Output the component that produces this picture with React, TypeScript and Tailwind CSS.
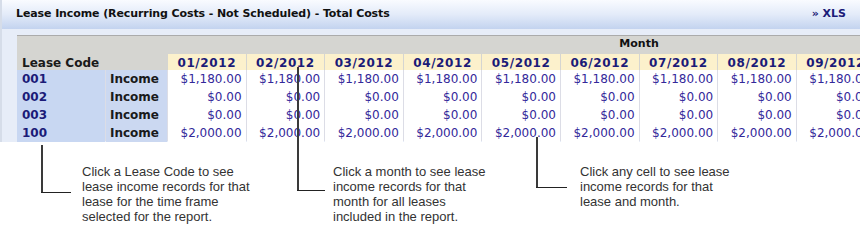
import React from "react";

const months = [
  "01/2012", "02/2012", "03/2012", "04/2012", "05/2012", "06/2012",
  "07/2012", "08/2012", "09/2012", "10/2012", "11/2012", "12/2012",
];

const rows = [
  { code: "001", val: "$1,180.00" },
  { code: "002", val: "$0.00" },
  { code: "003", val: "$0.00" },
  { code: "100", val: "$2,000.00" },
];

const gridCols = "grid grid-cols-[88px_61px_repeat(12,77.6px)] gap-x-px";

export default function App() {
  return (
    <div className="relative w-[860px] h-[242px] overflow-hidden bg-white" style={{ fontFamily: '"DejaVu Sans", Verdana, sans-serif' }}>
      {/* Panel */}
      <div className="h-[142px] overflow-hidden bg-[#e7edf8] border-l-2 border-[#d6dde9]">
        <div className="h-[29px] bg-gradient-to-b from-[#f9fbff] via-[#e3ebf9] to-[#c3d3ef] flex items-center justify-between pl-[14px] pr-[14px]">
          <span className="text-[11px] font-bold text-[#111] tracking-[-0.1px]">
            Lease Income (Recurring Costs - Not Scheduled) - Total Costs
          </span>
          <span className="text-[11px] font-bold text-[#1b1b78]">» XLS</span>
        </div>
        <div className="pt-[6px] pl-[15px]">
          <div className="w-[1106px] bg-[#d5d5d1] border-t border-[#ababab]">
            {/* Header row 1 */}
            <div className={`${gridCols} h-[17px]`}>
              <div />
              <div />
              <div className="col-span-12 flex items-center justify-center text-[11px] font-bold text-[#111]">
                Month
              </div>
            </div>
            {/* Header row 2 */}
            <div className={`${gridCols} h-[17px]`}>
              <div className="flex items-center pl-[5px] text-[12px] font-bold text-[#1a1a1a] whitespace-nowrap">
                Lease Code
              </div>
              <div />
              {months.map((m) => (
                <div
                  key={m}
                  className="mt-px bg-[#fcf1cc] flex items-center justify-center text-[12px] font-bold text-[#1b1b78] tracking-[0.6px]"
                >
                  {m}
                </div>
              ))}
            </div>
          </div>
          {/* Data rows */}
          <div className="w-[1106px] bg-[#dcdde6] flex flex-col gap-y-px">
            {rows.map((r) => (
              <div key={r.code} className={`${gridCols} h-[17px]`}>
                <div className="bg-[#c8d7f2] flex items-center pl-[5px] text-[12px] font-bold text-[#1b1b78]">
                  {r.code}
                </div>
                <div className="bg-[#cbd8f1] flex items-center pl-[4px] text-[12px] font-bold text-[#1a1a1a]">
                  Income
                </div>
                {months.map((m) => (
                  <div
                    key={m}
                    className="bg-white flex items-center justify-end pr-[4px] text-[12px] text-[#33289a] whitespace-nowrap"
                  >
                    {r.val}
                  </div>
                ))}
              </div>
            ))}
          </div>
        </div>
      </div>

      {/* Annotations */}
      <div
        className="flex pt-[22px] pl-[82px] text-[13px] leading-[15px] text-[#333]"
        style={{ fontFamily: '"Liberation Sans", Arial, sans-serif' }}
      >
        <div className="w-[251px]">
          Click a Lease Code to see<br />
          lease income records for that<br />
          lease for the time frame<br />
          selected for the report.
        </div>
        <div className="w-[247px]">
          Click a month to see lease<br />
          income records for that<br />
          month for all leases<br />
          included in the report.
        </div>
        <div className="w-[200px]">
          Click any cell to see lease<br />
          income records for that<br />
          lease and month.
        </div>
      </div>

      {/* Connector lines (overlay) */}
      <div className="absolute left-[41px] top-[145px] w-[2px] h-[48px] bg-[#3a3a3a]" />
      <div className="absolute left-[41px] top-[192px] w-[30px] h-px bg-[#222]" />

      <div className="absolute left-[297px] top-[67px] w-[2px] h-[124px] bg-[#3a3a3a]" />
      <div className="absolute left-[297px] top-[190px] w-[28px] h-px bg-[#222]" />

      <div className="absolute left-[536px] top-[137px] w-[2px] h-[51px] bg-[#3a3a3a]" />
      <div className="absolute left-[536px] top-[187px] w-[31px] h-px bg-[#222]" />
    </div>
  );
}
